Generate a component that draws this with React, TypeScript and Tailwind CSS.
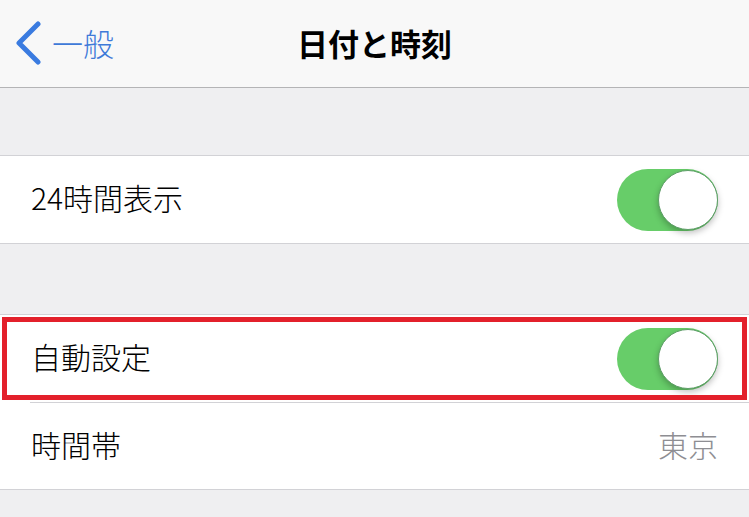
import React from "react";

const font = { fontFamily: '"Noto Sans CJK JP", "Noto Sans", sans-serif' };

function Toggle() {
  return (
    <div className="relative h-[62px] w-[101px] rounded-full bg-[#67cd69]">
      <div className="absolute right-0 top-[1px] h-[60px] w-[60px] rounded-full border border-[#5e9e68] bg-white shadow-[0_3px_6px_rgba(0,0,0,0.25)]" />
    </div>
  );
}

export default function App() {
  return (
    <div className="h-[517px] w-[749px] overflow-hidden bg-[#efeff1] text-black" style={font}>
      <div className="relative flex h-[88px] items-center justify-center border-b border-[#b4b4b6] bg-[#f8f8f8]">
        <div className="absolute left-[14px] top-0 flex h-full items-center gap-[10px]">
          <svg width="28" height="44" viewBox="0 0 28 44" className="mt-[-2px]">
            <polyline points="24,3 5,22 24,41" fill="none" stroke="#3a7be0" strokeWidth="5" strokeLinecap="round" strokeLinejoin="round" />
          </svg>
          <span className="text-[31px] font-light leading-none text-[#3f7ad8] mt-[-2px]">一般</span>
        </div>
        <span className="text-[31px] font-bold leading-none mt-[-2px]">日付と時刻</span>
      </div>
      <div className="h-[67px]" />
      <div className="border-y border-[#d2d2d6] bg-white">
        <div className="flex h-[87px] items-center justify-between pl-[31px] pr-[31px]">
          <span className="text-[30px] font-light leading-none mt-[-5px]">24時間表示</span>
          <Toggle />
        </div>
      </div>
      <div className="h-[70px]" />
      <div className="border-y border-[#d2d2d6] bg-white">
        <div className="relative flex h-[87px] items-center justify-between pl-[31px] pr-[31px]">
          <span className="text-[30px] font-light leading-none mt-[-6px]">自動設定</span>
          <Toggle />
          <div className="pointer-events-none absolute bottom-[2px] left-[2px] right-[2px] top-[2px] border-[5px] border-[#e3202b]" />
        </div>
        <div className="ml-[30px] h-px bg-[#d2d2d6]" />
        <div className="flex h-[86px] items-center justify-between pl-[31px] pr-[31px]">
          <span className="text-[30px] font-light leading-none mt-[-4px]">時間帯</span>
          <span className="text-[30px] font-light leading-none text-[#8e8e93] mt-[-4px]">東京</span>
        </div>
      </div>
    </div>
  );
}
